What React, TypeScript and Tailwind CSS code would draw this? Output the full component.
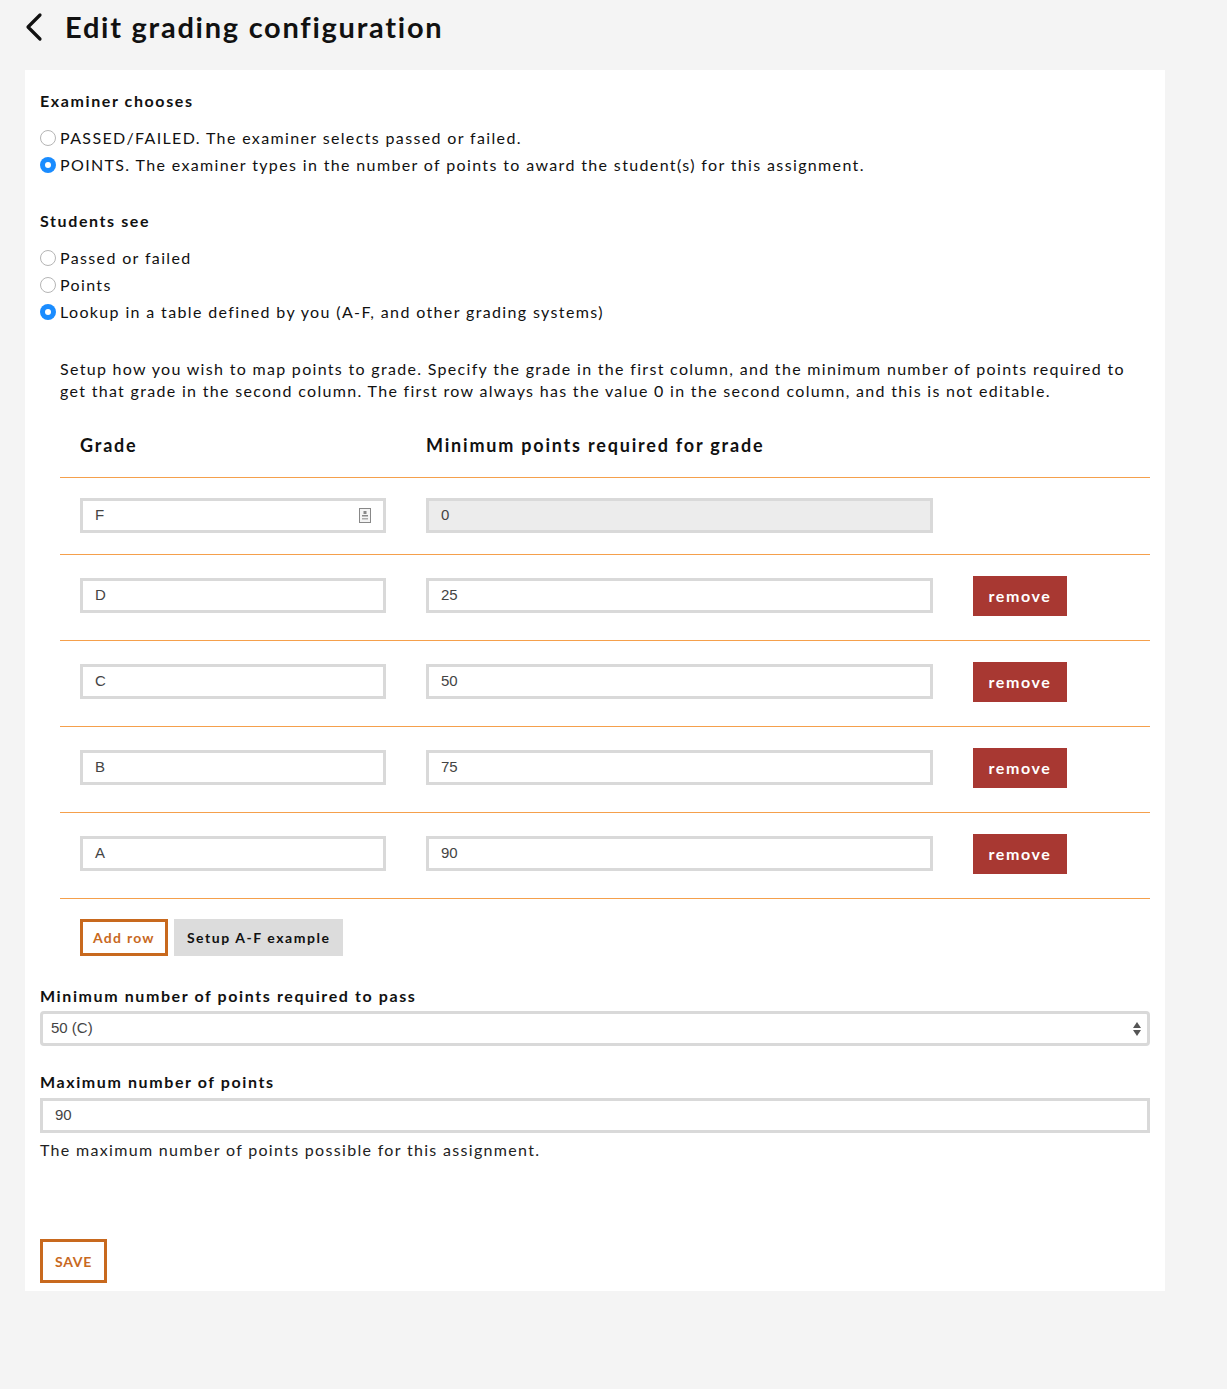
import React from 'react';

const font = { fontFamily: 'Lato, "Noto Sans", sans-serif' };
const inputFont = { fontFamily: '"Liberation Sans", Arial, sans-serif' };

const Radio: React.FC<{ checked?: boolean; label: string }> = ({ checked, label }) => (
  <div className="flex items-center h-[27px]">
    {checked ? (
      <span className="w-[16px] h-[16px] rounded-full bg-[#1a8cff] flex items-center justify-center shrink-0">
        <span className="w-[6px] h-[6px] rounded-full bg-white" />
      </span>
    ) : (
      <span className="w-[16px] h-[16px] rounded-full border border-[#b5b5b5] bg-white shrink-0" />
    )}
    <span className="ml-[4px] text-[16px] tracking-[0.085em] text-[#111]">{label}</span>
  </div>
);

const inputCls =
  'h-[35px] border-[3px] border-[#d9d9d9] bg-white px-[12px] flex items-center text-[15px] text-[#444]';

const rows = [
  { grade: 'D', pts: '25' },
  { grade: 'C', pts: '50' },
  { grade: 'B', pts: '75' },
  { grade: 'A', pts: '90' },
];

const App: React.FC = () => {
  return (
    <div className="min-h-[1389px] bg-[#f4f4f4] text-[#111]" style={font}>
      <div className="flex items-center h-[54px] pl-[24px]">
        <svg width="20" height="30" viewBox="0 0 20 30" className="mr-[21px]">
          <path d="M16 3 L4 15 L16 27" fill="none" stroke="#111" strokeWidth="3.2" strokeLinecap="round" strokeLinejoin="round" />
        </svg>
        <h1 className="text-[29px] font-bold tracking-[0.06em]">Edit grading configuration</h1>
      </div>

      <div className="ml-[25px] mt-[16px] w-[1140px] bg-white px-[15px] pt-[19px] pb-[8px]">
        <h2 className="text-[16px] font-bold tracking-[0.1em] h-[21px]">Examiner chooses</h2>
        <div className="mt-[14px]">
          <Radio label="PASSED/FAILED. The examiner selects passed or failed." />
          <Radio checked label="POINTS. The examiner types in the number of points to award the student(s) for this assignment." />
        </div>

        <h2 className="mt-[31px] text-[16px] font-bold tracking-[0.1em] h-[22px]">Students see</h2>
        <div className="mt-[13px]">
          <Radio label="Passed or failed" />
          <Radio label="Points" />
          <Radio checked label="Lookup in a table defined by you (A-F, and other grading systems)" />
        </div>

        <div className="ml-[20px]">
          <p className="mt-[33px] text-[16px] leading-[22px] tracking-[0.082em] pr-[16px]">
            Setup how you wish to map points to grade. Specify the grade in the first column, and the minimum number of points required to get that grade in the second column. The first row always has the value 0 in the second column, and this is not editable.
          </p>

          <div className="mt-[12px] flex items-center h-[64px] border-b border-[#f5a04c] text-[18px] font-bold tracking-[0.1em]">
            <div className="w-[366px] pl-[20px]">Grade</div>
            <div>Minimum points required for grade</div>
          </div>

          <div className="flex items-center h-[77px] border-b border-[#f5a04c] pl-[20px] pb-[2px]">
            <div className={inputCls + ' w-[306px] justify-between'} style={inputFont}>
              <span>F</span>
              <svg width="12" height="15" viewBox="0 0 12 15">
                <rect x="0.5" y="0.5" width="11" height="14" fill="#f4f4f4" stroke="#888" />
                <rect x="4.5" y="3" width="3" height="3" fill="#888" />
                <rect x="3" y="7" width="6" height="1.5" fill="#888" />
                <rect x="3" y="10" width="6" height="1.5" fill="#aaa" />
              </svg>
            </div>
            <div
              className="ml-[40px] w-[507px] h-[35px] border-[3px] border-[#d9d9d9] bg-[#ececec] px-[12px] flex items-center text-[15px] text-[#444]"
              style={inputFont}
            >
              0
            </div>
          </div>

          {rows.map((r) => (
            <div key={r.grade} className="flex items-center h-[86px] border-b border-[#f5a04c] pl-[20px] pb-[4px]">
              <div className={inputCls + ' w-[306px]'} style={inputFont}>
                {r.grade}
              </div>
              <div className={inputCls + ' ml-[40px] w-[507px]'} style={inputFont}>
                {r.pts}
              </div>
              <button className="ml-[40px] w-[94px] h-[40px] bg-[#a83832] text-white text-[16px] font-bold tracking-[0.1em]">
                remove
              </button>
            </div>
          ))}

          <div className="flex items-center mt-[20px] pl-[20px] gap-[6px]">
            <button className="h-[37px] px-[10px] border-[3px] border-[#c8691e] text-[#c8691e] text-[14px] font-bold tracking-[0.09em]">
              Add row
            </button>
            <button className="h-[37px] px-[13px] bg-[#dcdcdc] text-[#111] text-[14px] font-bold tracking-[0.11em]">
              Setup A-F example
            </button>
          </div>
        </div>

        <label className="block mt-[28px] text-[16px] font-bold tracking-[0.1em] h-[20px]">
          Minimum number of points required to pass
        </label>
        <div
          className="mt-[7px] h-[35px] border-[3px] border-[#d9d9d9] rounded-[4px] bg-white flex items-center justify-between pl-[8px] pr-[6px] text-[15px] text-[#444]"
          style={inputFont}
        >
          <span>50 (C)</span>
          <svg width="8" height="14" viewBox="0 0 8 14">
            <path d="M4 0 L8 6 L0 6 Z" fill="#555" />
            <path d="M0 8 L8 8 L4 14 Z" fill="#555" />
          </svg>
        </div>

        <label className="block mt-[24px] text-[16px] font-bold tracking-[0.1em] h-[20px]">
          Maximum number of points
        </label>
        <div className={inputCls + ' mt-[8px]'} style={inputFont}>
          90
        </div>
        <p className="mt-[5px] text-[16px] tracking-[0.082em] text-[#222]">
          The maximum number of points possible for this assignment.
        </p>

        <button className="mt-[77px] h-[44px] px-[12px] border-[3px] border-[#c8691e] text-[#c8691e] text-[14px] font-bold tracking-[0.05em]">
          SAVE
        </button>
      </div>
    </div>
  );
};

export default App;
